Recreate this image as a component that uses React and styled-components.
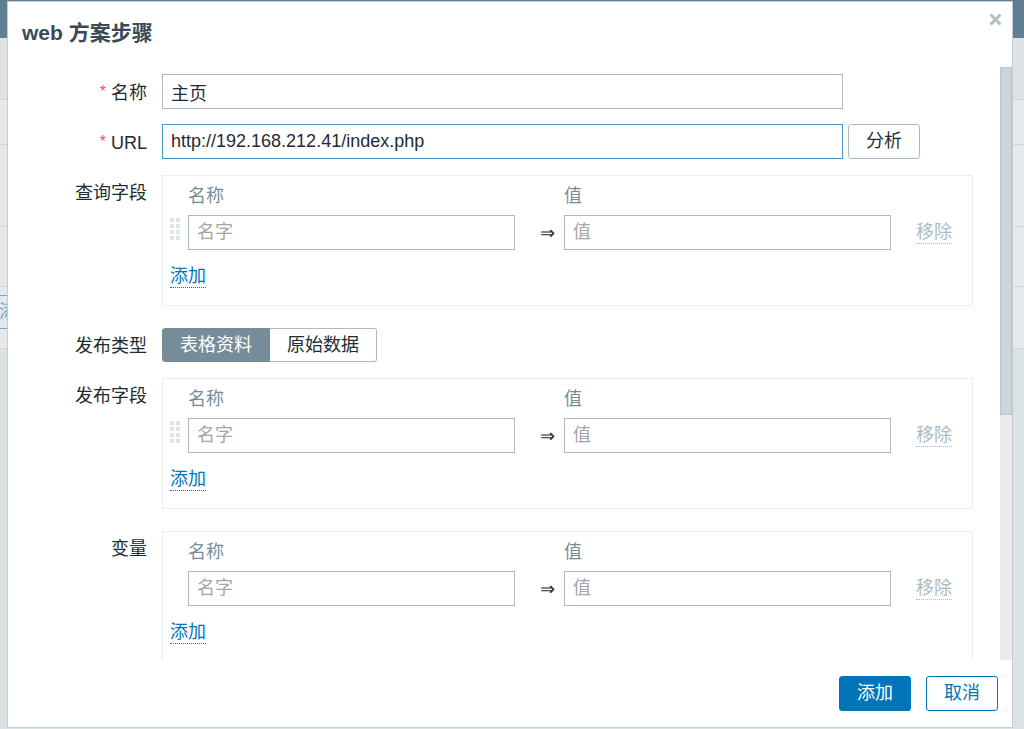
import React from "react";
import styled, { createGlobalStyle } from "styled-components";

const GlobalStyle = createGlobalStyle`
  html, body {
    margin: 0;
    padding: 0;
    height: 100%;
    overflow: hidden;
    font-family: "Liberation Sans", Arial, "Noto Sans CJK SC", sans-serif;
    font-size: 18px;
    color: #1f2c33;
  }
  * { box-sizing: border-box; }
`;

/* ---------- dimmed page behind the dialog ---------- */

const Page = styled.div`
  width: 1024px;
  height: 729px;
  background: #dce1e4;
  display: flex;
  flex-direction: column;
`;

const PageHeader = styled.div`
  height: 38px;
  background: #5f7e94;
  flex: none;
`;

const PageBand = styled.div`
  height: ${(p) => p.h}px;
  background: ${(p) => p.bg || "#dfe3e6"};
  border-bottom: 1px solid #cfd5d9;
  flex: none;
  padding-top: 8px;
`;

const PageButton = styled.div`
  width: 60px;
  height: 34px;
  margin-left: -40px;
  border: 1px solid #6ea7cc;
  color: #6ea7cc;
  font-size: 18px;
  line-height: 32px;
  padding-left: 38px;
`;

/* ---------- dialog ---------- */

const Dialog = styled.div`
  position: fixed;
  left: 7px;
  top: 1px;
  width: 1006px;
  height: 727px;
  background: #fff;
  border: 1px solid #c5cdd2;
  display: flex;
  flex-direction: column;
`;

const DialogHeader = styled.div`
  position: relative;
  height: 65px;
  flex: none;
  padding: 18px 14px 0;
`;

const Title = styled.h4`
  margin: 0;
  font-size: 21px;
  line-height: 25px;
  font-weight: bold;
  color: #384a56;
`;

const CloseButton = styled.button`
  position: absolute;
  right: 10px;
  top: 10px;
  width: 14px;
  height: 14px;
  padding: 0;
  border: 0;
  background: transparent;
  display: flex;
  align-items: center;
  justify-content: center;
`;

const DialogBody = styled.div`
  flex: 1;
  min-height: 0;
  display: flex;
`;

const BodyContent = styled.div`
  flex: 1;
  overflow: hidden;
  padding: 7px 0 15px 14px;
`;

const ScrollTrack = styled.div`
  width: 12px;
  flex: none;
  background: #ebebeb;
`;

const ScrollThumb = styled.div`
  height: ${(p) => p.h}px;
  background: #ccd5da;
  border: 1px solid #b9c4cb;
`;

const DialogFooter = styled.div`
  flex: none;
  height: 67px;
  display: flex;
  justify-content: flex-end;
  gap: 15px;
  padding: 16px 14px 0 0;
`;

/* ---------- form ---------- */

const FormRow = styled.div`
  display: grid;
  grid-template-columns: 125px 1fr;
  column-gap: 15px;
  margin-bottom: ${(p) => p.gap ?? 15}px;
`;

const Label = styled.label`
  text-align: right;
  padding-top: 7px;
  line-height: 22px;
  white-space: nowrap;

  ${(p) =>
    p.required &&
    `
    &::before {
      content: "*";
      color: #e45959;
      margin-right: 5px;
      font-size: 16px;
      vertical-align: 2px;
    }
  `}
`;

const Field = styled.div`
  display: flex;
  align-items: center;
  gap: 5px;
`;

const TextInput = styled.input`
  width: ${(p) => p.w}px;
  height: 35px;
  padding: 0 8px;
  border: 1px solid ${(p) => (p.focused ? "#4796c4" : "#acbbc2")};
  background: #fff;
  font: inherit;
  font-size: 18px;
  color: #1f2c33;
  outline: none;

  &::placeholder {
    color: #a6a6a6;
  }
`;

const Button = styled.button`
  height: 35px;
  padding: 0 ${(p) => p.pad ?? 17}px;
  border-radius: 3px;
  font: inherit;
  font-size: 18px;
  line-height: 33px;
  cursor: pointer;
  border: 1px solid
    ${(p) => (p.variant === "primary" || p.variant === "outline" ? "#0275b8" : "#acbbc2")};
  background: ${(p) => (p.variant === "primary" ? "#0275b8" : "#fff")};
  color: ${(p) =>
    p.variant === "primary" ? "#fff" : p.variant === "outline" ? "#0275b8" : "#1f2c33"};
`;

const Segmented = styled.div`
  display: inline-flex;
  height: 34px;
`;

const Segment = styled.span`
  display: flex;
  align-items: center;
  padding: 0 17px;
  border: 1px solid ${(p) => (p.active ? "#768d99" : "#acbbc2")};
  background: ${(p) => (p.active ? "#768d99" : "#fff")};
  color: ${(p) => (p.active ? "#fff" : "#1f2c33")};
  line-height: 22px;

  & + & {
    border-left: 0;
  }
  &:first-child {
    border-radius: 3px 0 0 3px;
  }
  &:last-child {
    border-radius: 0 3px 3px 0;
  }
`;

const FieldBox = styled.div`
  width: 811px;
  border: 1px solid #ebeef0;
  padding: 9px 7px 17px;
`;

const PairGrid = styled.div`
  display: grid;
  grid-template-columns: 18px 327px 49px 327px auto;
  row-gap: 8px;
  align-items: center;
`;

const HeadCell = styled.div`
  color: #768d99;
  line-height: 22px;
`;

const Arrow = styled.span`
  padding-left: 25px;
  font-family: "DejaVu Sans", sans-serif;
  font-size: 18px;
  line-height: 22px;
  font-weight: 300;
`;

const RemoveLink = styled.span`
  justify-self: start;
  margin-left: 25px;
  color: #acbbc2;
  line-height: 22px;
  border-bottom: 1px dotted #acbbc2;
`;

const AddLink = styled.span`
  display: inline-block;
  margin-top: 16px;
  color: #0275b8;
  line-height: 21px;
  border-bottom: 1px dotted #0275b8;
  cursor: pointer;
`;

const Checkbox = styled.span`
  display: inline-block;
  width: 18px;
  height: 18px;
  margin-top: 2px;
  border: 1px solid #acbbc2;
  background: #fff;
`;

const CloseIcon = () => (
  <svg width="13" height="13" viewBox="0 0 13 13">
    <path d="M1.5 1.5 L11.5 11.5 M11.5 1.5 L1.5 11.5" stroke="#b4c0c6" strokeWidth="3" />
  </svg>
);

const DragHandle = () => (
  <svg width="11" height="24" viewBox="0 0 11 24">
    {[0, 6, 12, 18].map((y) =>
      [0, 6].map((x) => <rect key={`${x}-${y}`} x={x} y={y} width="4" height="4" fill="#dfe4e7" />)
    )}
  </svg>
);

const PairBox = ({ draggable }) => (
  <FieldBox>
    <PairGrid>
      <span />
      <HeadCell>名称</HeadCell>
      <span />
      <HeadCell>值</HeadCell>
      <span />
      <span>{draggable && <DragHandle />}</span>
      <TextInput w={327} placeholder="名字" />
      <Arrow>⇒</Arrow>
      <TextInput w={327} placeholder="值" />
      <RemoveLink>移除</RemoveLink>
    </PairGrid>
    <AddLink>添加</AddLink>
  </FieldBox>
);

export default function App() {
  return (
    <>
      <GlobalStyle />
      <Page>
        <PageHeader />
        <PageBand h={62} />
        <PageBand h={45} bg="#e6e9ec" />
        <PageBand h={82} bg="#e6e9ec" />
        <PageBand h={60} bg="#e6e9ec" />
        <PageBand h={62} bg="#e6e9ec">
          <PageButton>添</PageButton>
        </PageBand>
      </Page>

      <Dialog>
        <DialogHeader>
          <Title>web 方案步骤</Title>
          <CloseButton aria-label="关闭">
            <CloseIcon />
          </CloseButton>
        </DialogHeader>

        <DialogBody>
          <BodyContent>
            <FormRow>
              <Label required>名称</Label>
              <Field>
                <TextInput w={681} defaultValue="主页" />
              </Field>
            </FormRow>

            <FormRow gap={16}>
              <Label required>URL</Label>
              <Field>
                <TextInput w={681} focused defaultValue="http://192.168.212.41/index.php" />
                <Button pad={17}>分析</Button>
              </Field>
            </FormRow>

            <FormRow gap={22}>
              <Label>查询字段</Label>
              <PairBox draggable />
            </FormRow>

            <FormRow gap={16}>
              <Label>发布类型</Label>
              <Field>
                <Segmented>
                  <Segment active>表格资料</Segment>
                  <Segment>原始数据</Segment>
                </Segmented>
              </Field>
            </FormRow>

            <FormRow gap={22}>
              <Label>发布字段</Label>
              <PairBox draggable />
            </FormRow>

            <FormRow gap={22}>
              <Label>变量</Label>
              <PairBox />
            </FormRow>

            <FormRow gap={22}>
              <Label>标题</Label>
              <PairBox draggable />
            </FormRow>

            <FormRow>
              <Label>跟随跳转</Label>
              <Field>
                <Checkbox />
              </Field>
            </FormRow>

            <FormRow>
              <Label>检索方式</Label>
              <Field>
                <Segmented>
                  <Segment active>内容</Segment>
                  <Segment>标题</Segment>
                  <Segment>标题和内容</Segment>
                </Segmented>
              </Field>
            </FormRow>
          </BodyContent>
          <ScrollTrack>
            <ScrollThumb h={348} />
          </ScrollTrack>
        </DialogBody>

        <DialogFooter>
          <Button variant="primary">添加</Button>
          <Button variant="outline">取消</Button>
        </DialogFooter>
      </Dialog>
    </>
  );
}
